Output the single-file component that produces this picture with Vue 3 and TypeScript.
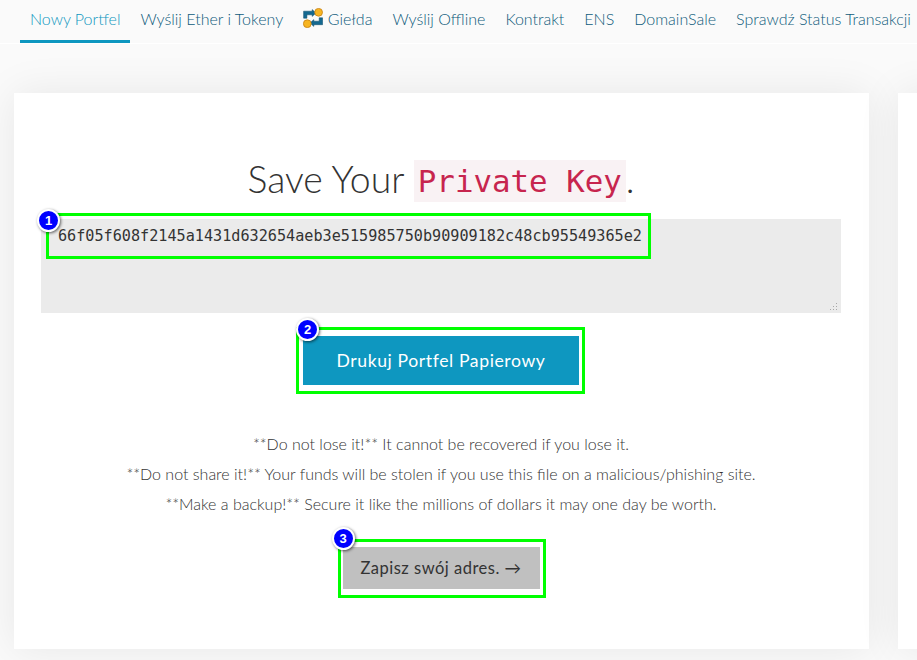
<template>
  <div class="page">
    <nav class="tabs">
      <a
        v-for="tab in tabs"
        :key="tab.label"
        class="tab"
        :class="{ active: tab.active }"
        href="#"
      >
        <svg v-if="tab.icon" class="swap-icon" viewBox="0 0 20 20" width="20" height="20">
          <path
            d="M0.6 3.2h8.6V1.6l3.8 3.4-3.8 3.4V6.8H3.9v3.4H0.6z"
            fill="#14688f"
            stroke="#0d4a68"
            stroke-width="0.5"
          />
          <path
            d="M19.6 9.8v6.9h-8.8v1.7L7 15l3.8-3.4v1.6h5.4V9.8z"
            fill="#14688f"
            stroke="#0d4a68"
            stroke-width="0.5"
          />
          <circle cx="15.6" cy="4.3" r="3.9" fill="#f7b521" stroke="#c77f12" stroke-width="0.8" />
          <circle cx="4.3" cy="15.7" r="3.9" fill="#f7b521" stroke="#c77f12" stroke-width="0.8" />
        </svg>
        {{ tab.label }}
      </a>
    </nav>

    <main class="cards">
      <section class="card">
        <h1 class="title">Save Your <code class="key-word">Private Key</code>.</h1>

        <div class="marked key-box">
          <textarea class="key-input" readonly :value="privateKey"></textarea>
          <svg class="grip" viewBox="0 0 7 7" width="7" height="7">
            <path d="M6 0h1v1H6zM3 3h1v1H3zM6 3h1v1H6zM0 6h1v1H0zM3 6h1v1H3zM6 6h1v1H6z" fill="#a8a8a8" />
          </svg>
          <span class="highlight h-key"></span>
          <span class="badge b-key">1</span>
        </div>

        <div class="marked print-wrap">
          <a class="btn btn-primary" href="#">Drukuj Portfel Papierowy</a>
          <span class="highlight h-print"></span>
          <span class="badge b-print">2</span>
        </div>

        <div class="warnings">
          <p v-for="line in warnings" :key="line">{{ line }}</p>
        </div>

        <div class="marked next-wrap">
          <a class="btn btn-next" href="#">Zapisz swój adres. →</a>
          <span class="highlight h-next"></span>
          <span class="badge b-next">3</span>
        </div>
      </section>
      <section class="card card-next"></section>
    </main>
  </div>
</template>

<script setup lang="ts">
interface Tab {
  label: string
  active?: boolean
  icon?: boolean
}

const tabs: Tab[] = [
  { label: 'Nowy Portfel', active: true },
  { label: 'Wyślij Ether i Tokeny' },
  { label: 'Giełda', icon: true },
  { label: 'Wyślij Offline' },
  { label: 'Kontrakt' },
  { label: 'ENS' },
  { label: 'DomainSale' },
  { label: 'Sprawdź Status Transakcji' },
]

const privateKey = '66f05f608f2145a1431d632654aeb3e515985750b90909182c48cb95549365e2'

const warnings = [
  '**Do not lose it!** It cannot be recovered if you lose it.',
  '**Do not share it!** Your funds will be stolen if you use this file on a malicious/phishing site.',
  '**Make a backup!** Secure it like the millions of dollars it may one day be worth.',
]
</script>

<style>
html,
body {
  margin: 0;
  background: #fafafa;
  overflow: hidden;
}
</style>

<style scoped>
.page {
  width: 917px;
  height: 660px;
  overflow: hidden;
  background: #fafafa;
  font-family: Lato, "Open Sans", sans-serif;
  color: #333;
}

.tabs {
  display: flex;
  height: 43px;
  padding-left: 20px;
  white-space: nowrap;
  background: #fafafa;
  box-shadow: 0 1px 0 #fff;
}

.tab {
  display: flex;
  align-items: center;
  gap: 4.6px;
  flex-shrink: 0;
  height: 36px;
  padding: 0 10px 4px;
  font-size: 16px;
  font-weight: 300;
  color: #0e5a7a;
  text-decoration: none;
  border-bottom: 3px solid transparent;
}

.tab.active {
  color: #0e97c0;
  border-bottom-color: #0e97c0;
}

.swap-icon {
  flex-shrink: 0;
}

.cards {
  display: flex;
  gap: 29px;
  padding: 50px 0 0 14px;
}

.card {
  flex-shrink: 0;
  display: flex;
  flex-direction: column;
  align-items: center;
  box-sizing: border-box;
  width: 855px;
  height: 556px;
  padding: 59px 28px 0 27px;
  background: #fff;
  box-shadow: 0 0 40px rgba(0, 0, 0, 0.08);
}

.title {
  margin: 0;
  height: 67px;
  font-size: 37.4px;
  font-weight: 300;
  line-height: 53px;
  color: #333;
}

.key-word {
  padding: 3px 4px;
  vertical-align: 1px;
  font-family: "DejaVu Sans Mono", monospace;
  font-size: 30.8px;
  font-weight: 400;
  color: #c7254e;
  background: #f9f2f4;
}

.marked {
  position: relative;
}

.key-box {
  width: 800px;
  height: 94px;
}

.key-input {
  display: block;
  box-sizing: border-box;
  width: 800px;
  height: 94px;
  padding: 7px 17px;
  border: 0;
  outline: 0;
  resize: none;
  font-family: "DejaVu Sans Mono", monospace;
  font-size: 15.17px;
  line-height: 20px;
  color: #333;
  background: #ebebeb;
}

.grip {
  position: absolute;
  right: 4px;
  bottom: 3px;
}

.print-wrap {
  margin-top: 23px;
}

.btn {
  display: block;
  box-sizing: border-box;
  text-align: center;
  text-decoration: none;
}

.btn-primary {
  width: 276px;
  height: 49px;
  line-height: 49px;
  font-size: 17.6px;
  letter-spacing: 0.6px;
  color: #fff;
  background: #0e97c0;
}

.warnings {
  margin-top: 44px;
  font-size: 16px;
  font-weight: 300;
  line-height: 30px;
  text-align: center;
}

.warnings p {
  margin: 0;
}

.next-wrap {
  margin-top: 28px;
}

.btn-next {
  width: 197px;
  height: 42px;
  line-height: 42px;
  font-size: 16.5px;
  letter-spacing: 0.5px;
  color: #333;
  background: #c0c0c0;
}

.highlight {
  position: absolute;
  box-sizing: border-box;
  border: 3px solid #00ff00;
  pointer-events: none;
}

.h-key {
  left: 5px;
  top: -6px;
  width: 605px;
  height: 46px;
}

.h-print {
  left: -7px;
  top: -9px;
  width: 289px;
  height: 67px;
}

.h-next {
  left: -5px;
  top: -8px;
  width: 208px;
  height: 59px;
}

.badge {
  position: absolute;
  box-sizing: border-box;
  width: 23px;
  height: 23px;
  border: 2px solid #fff;
  border-radius: 50%;
  font-family: "Liberation Sans", sans-serif;
  font-size: 13px;
  font-weight: 700;
  line-height: 19px;
  text-align: center;
  color: #fff;
  background: #0000ff;
  box-shadow: 1px 1px 3px rgba(0, 0, 0, 0.6);
}

.b-key {
  left: -4px;
  top: -10px;
}

.b-print {
  left: -7px;
  top: -18px;
}

.b-next {
  left: -11px;
  top: -20px;
}
</style>
